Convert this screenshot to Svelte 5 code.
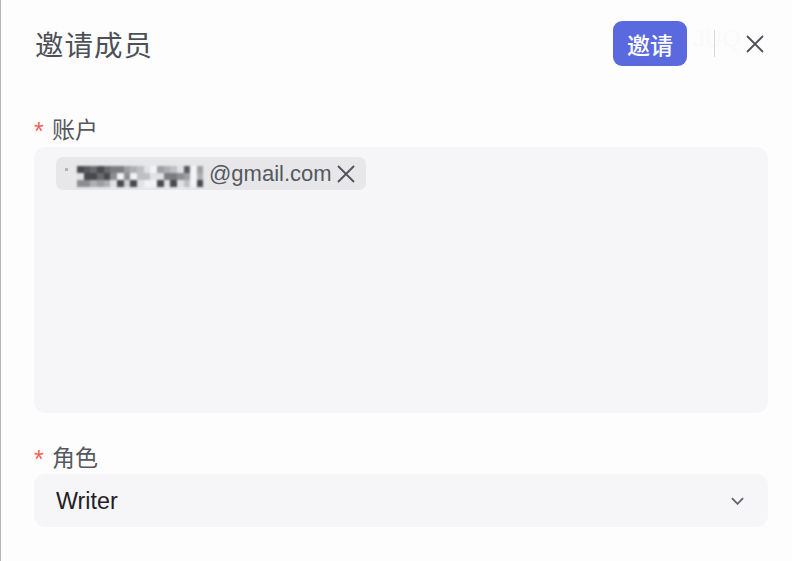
<script lang="ts">
	// pixelated part of the address, one string per row, hex digit = grey level
	const rows = [
		'5675788abcefabce6fa',
		'e55759f9fccee889afb',
		'99babe5d5eff5e5ecf5'
	];

	const grey = (c: string) => {
		const v = parseInt(c, 16) * 17;
		return `rgb(${v - 14}, ${v - 12}, ${v - 8})`;
	};
</script>

<div class="dialog">
	<span class="mark top">JUQ</span>
	<span class="mark bottom">UkdJUQ</span>

	<header class="head">
		<h1>邀请成员</h1>
		<div class="actions">
			<button class="invite">邀请</button>
			<span class="divider"></span>
			<button class="close" aria-label="关闭">
				<svg width="20" height="20" viewBox="0 0 20 20"><path d="M2 2l16 16M18 2L2 18" /></svg>
			</button>
		</div>
	</header>

	<div class="field">
		<div class="label"><i>*</i>账户</div>
		<div class="box accounts">
			<div class="tag">
				<span class="speck"></span>
				<div class="mosaic">
					{#each rows as row}
						<div class="row">
							{#each row.split('') as c}
								<span class="px" style="background: {grey(c)}"></span>
							{/each}
						</div>
					{/each}
				</div>
				<span class="mail">@gmail.com</span>
				<svg width="20" height="20" viewBox="0 0 20 20"><path d="M2 2l16 16M18 2L2 18" /></svg>
			</div>
		</div>
	</div>

	<div class="field role">
		<div class="label"><i>*</i>角色</div>
		<div class="box select">
			<span class="value">Writer</span>
			<svg width="13" height="8" viewBox="0 0 14 8"><path d="M1 1l6 6 6-6" /></svg>
		</div>
	</div>
</div>

<style>
	:global(body) {
		background: #fff;
	}
	.dialog {
		position: relative;
		box-sizing: border-box;
		width: 792px;
		height: 561px;
		padding: 21px 24px 0 33px;
		border-left: 1px solid #b4b4b4;
		background: #fdfdfd;
		font-family: 'Noto Sans CJK SC', 'Liberation Sans', sans-serif;
		overflow: hidden;
	}
	.mark {
		position: absolute;
		font: 24px 'Liberation Sans', sans-serif;
		color: #fafafb;
		white-space: nowrap;
	}
	.mark.top {
		left: 692px;
		top: 25px;
	}
	.mark.bottom {
		left: 120px;
		top: 475px;
		z-index: 1;
		color: rgba(0, 0, 0, 0.012);
	}
	.head {
		position: relative;
		display: flex;
		justify-content: space-between;
		align-items: center;
		height: 45px;
		margin: 0 3px 43px 0;
	}
	h1 {
		margin: 0 0 0 1px;
		font-size: 28.5px;
		font-weight: 400;
		letter-spacing: 1px;
		color: #4d5057;
	}
	.actions {
		display: flex;
		align-items: center;
	}
	.invite {
		width: 74px;
		height: 45px;
		padding: 0;
		border: 0;
		border-radius: 9px;
		background: #5a6ade;
		color: #fff;
		font: 500 23px 'Noto Sans CJK SC', sans-serif;
	}
	.divider {
		width: 1px;
		height: 27px;
		margin: 0 30px 0 27px;
		background: #d8d8da;
	}
	.close {
		display: flex;
		padding: 0;
		border: 0;
		background: none;
	}
	svg path {
		fill: none;
		stroke: #4f5259;
		stroke-width: 1.8;
	}
	.label {
		display: flex;
		align-items: center;
		height: 38px;
		font-size: 23px;
		color: #55585f;
	}
	.role .label {
		height: 37px;
	}
	.label i {
		width: 18px;
		padding-top: 7px;
		font: normal 25px 'Liberation Sans', sans-serif;
		color: #f0625a;
	}
	.box {
		border-radius: 11px;
		background: #f6f6f8;
	}
	.accounts {
		height: 266px;
		padding: 10px 22px;
		box-sizing: border-box;
	}
	.tag {
		display: flex;
		align-items: center;
		width: 310px;
		height: 33px;
		box-sizing: border-box;
		padding-left: 9px;
		border-radius: 7px;
		background: #e7e7e9;
		font: 22px 'Liberation Sans', sans-serif;
		color: #55585f;
	}
	.speck {
		width: 3px;
		height: 3px;
		margin: 0 9px 9px 0;
		flex: none;
		background: #b4b5b8;
		filter: blur(0.5px);
	}
	.mosaic {
		display: flex;
		flex-direction: column;
		width: 132px;
		flex: none;
		margin-top: 6px;
		filter: blur(0.8px);
	}
	.row {
		display: flex;
		height: 7px;
	}
	.px {
		width: 6.67px;
		flex: none;
	}
	.mail {
		margin-right: 4px;
		white-space: nowrap;
	}
	.role {
		margin-top: 24px;
	}
	.select {
		display: flex;
		justify-content: space-between;
		align-items: center;
		height: 53px;
		padding: 0 24px 0 22px;
		font: 23.3px 'Liberation Sans', sans-serif;
		color: #1f2024;
	}
	.value {
		padding-top: 1px;
	}
	.select svg path {
		stroke: #5f6274;
		stroke-width: 2;
	}
</style>
